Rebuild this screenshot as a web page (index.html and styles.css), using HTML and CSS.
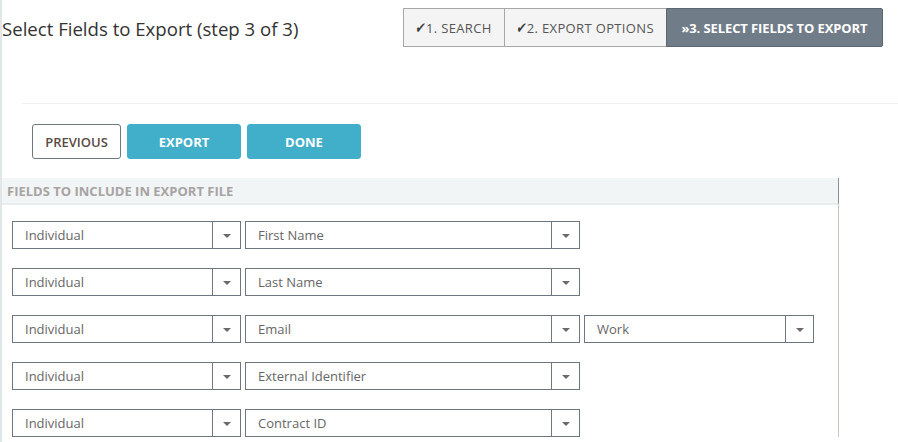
FILE: index.html
```html
<!DOCTYPE html>
<html>
<head>
<meta charset="utf-8">
<link rel="stylesheet" href="styles.css">
</head>
<body>
<div class="page">
  <header class="top">
    <h1 class="title">Select Fields to Export (step 3 of 3)</h1>
    <nav class="steps">
      <span class="step"><span class="check">&#10004;</span>1. SEARCH</span>
      <span class="step"><span class="check">&#10004;</span>2. EXPORT OPTIONS</span>
      <span class="step step-active">&raquo;3. SELECT FIELDS TO EXPORT</span>
    </nav>
  </header>
  <div class="divider"></div>
  <div class="actions">
    <button class="btn btn-outline">PREVIOUS</button>
    <button class="btn btn-primary">EXPORT</button>
    <button class="btn btn-primary">DONE</button>
  </div>
  <section class="fields">
    <div class="fields-head">FIELDS TO INCLUDE IN EXPORT FILE</div>
    <div class="fields-body">
      <div class="row">
        <div class="select s-entity"><span class="val">Individual</span><span class="arrow"></span></div>
        <div class="select s-field"><span class="val">First Name</span><span class="arrow"></span></div>
      </div>
      <div class="row">
        <div class="select s-entity"><span class="val">Individual</span><span class="arrow"></span></div>
        <div class="select s-field"><span class="val">Last Name</span><span class="arrow"></span></div>
      </div>
      <div class="row">
        <div class="select s-entity"><span class="val">Individual</span><span class="arrow"></span></div>
        <div class="select s-field"><span class="val">Email</span><span class="arrow"></span></div>
        <div class="select s-type"><span class="val">Work</span><span class="arrow"></span></div>
      </div>
      <div class="row">
        <div class="select s-entity"><span class="val">Individual</span><span class="arrow"></span></div>
        <div class="select s-field"><span class="val">External Identifier</span><span class="arrow"></span></div>
      </div>
      <div class="row">
        <div class="select s-entity"><span class="val">Individual</span><span class="arrow"></span></div>
        <div class="select s-field"><span class="val">Contract ID</span><span class="arrow"></span></div>
      </div>
    </div>
  </section>
</div>
</body>
</html>
```

FILE: styles.css
```css
html, body {
  margin: 0;
  padding: 0;
  background: #fff;
}
body {
  font-family: "Open Sans", "Liberation Sans", sans-serif;
  color: #333;
  height: 442px;
  overflow: hidden;
}
.page {
  border-left: 2px solid #e1e6e9;
  min-height: 442px;
  box-sizing: border-box;
}
.top {
  display: flex;
  align-items: center;
  justify-content: space-between;
  padding: 8px 15px 0 0;
}
.title {
  margin: 0;
  font-size: 18.6px;
  font-weight: 400;
  color: #333;
  line-height: 24px;
  padding-top: 2px;
}
.steps {
  display: flex;
}
.step {
  display: block;
  height: 39px;
  box-sizing: border-box;
  line-height: 38px;
  padding: 0 12px;
  font-size: 13px;
  letter-spacing: 0.35px;
  color: #555;
  background: #f4f4f4;
  border: 1px solid #a7a7a7;
  white-space: nowrap;
}
.check {
  font-family: "DejaVu Sans", sans-serif;
  font-size: 15px;
  color: #3a3a3a;
  display: inline-block;
  width: 10px;
  letter-spacing: 0;
  overflow: visible;
  transform: skewX(-10deg) scaleX(0.75);
  transform-origin: left center;
}
.step + .step {
  margin-left: -1px;
}
.step-active {
  background: #717c89;
  border-color: #5c6670;
  color: #fff;
  font-weight: 700;
  border-radius: 0 2px 2px 0;
  padding: 0 14.5px;
  letter-spacing: -0.1px;
}
.divider {
  height: 1px;
  background: #f0f0f0;
  margin: 56px 0 0 20px;
}
.actions {
  display: flex;
  gap: 6px;
  padding: 20px 0 0 30px;
}
.btn {
  height: 35px;
  box-sizing: border-box;
  font-family: "Open Sans", "Liberation Sans", sans-serif;
  font-size: 13px;
  font-weight: 600;
  border-radius: 3px;
  padding: 0;
  cursor: pointer;
}
.btn-outline {
  width: 89px;
  background: #fff;
  border: 1px solid #6f7880;
  color: #5a4a44;
}
.btn-primary {
  width: 114px;
  background: #42afca;
  border: 1px solid #42afca;
  color: #fff;
  font-weight: 700;
}
.fields {
  margin-top: 19px;
  width: 837px;
}
.fields-head {
  height: 25px;
  line-height: 26px;
  background: #f2f5f6;
  border-bottom: 2px solid #eaeded;
  border-right: 1px solid #8e8e8e;
  padding-left: 5px;
  font-size: 13px;
  font-weight: 700;
  color: #a8a3a3;
}
.fields-body {
  border-right: 1px solid #c8c8c0;
  padding: 16px 0 0 10px;
  display: flex;
  flex-direction: column;
  gap: 19px;
}
.row {
  display: flex;
  gap: 4px;
}
.select {
  display: flex;
  height: 28px;
  box-sizing: border-box;
  border: 1px solid #6e7780;
  font-size: 13px;
  color: #666;
}
.val {
  flex: 1;
  line-height: 27px;
  padding-left: 12px;
}
.arrow {
  width: 27px;
  border-left: 1px solid #6e7780;
  position: relative;
}
.arrow::after {
  content: "";
  position: absolute;
  left: 10px;
  top: 12px;
  border-left: 4px solid transparent;
  border-right: 4px solid transparent;
  border-top: 4px solid #6a6a6a;
}
.s-entity { width: 229px; }
.s-field { width: 335px; }
.s-type { width: 230px; }
```
